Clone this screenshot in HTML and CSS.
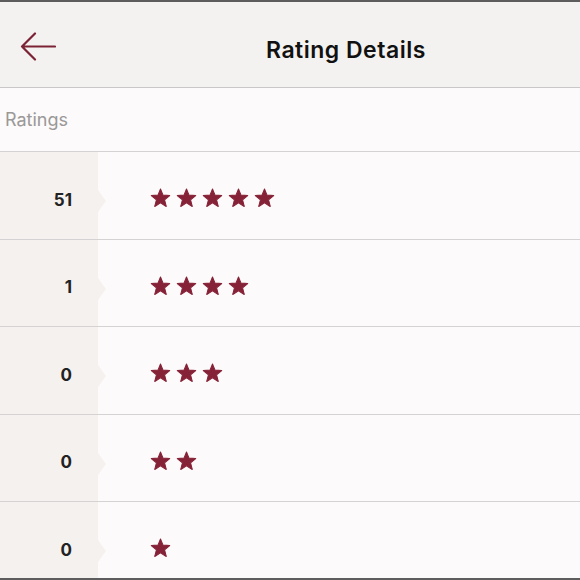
FILE: index.html
```html
<!DOCTYPE html>
<html>
<head>
<meta charset="utf-8">
<link rel="stylesheet" href="styles.css">
</head>
<body>
<div class="screen">
  <div class="topline"></div>
  <header class="header">
    <button class="back" aria-label="Back">
      <svg width="36" height="30" viewBox="0 0 36 30"><path d="M35 14.5 H2 M15 1.5 L2 14.5 L15 27.5" fill="none" stroke="#7c2235" stroke-width="2.2" stroke-linecap="round" stroke-linejoin="round"/></svg>
    </button>
    <h1 class="title">Rating Details</h1>
  </header>
  <div class="label">Ratings</div>
  <div class="list">
    <div class="row"><div class="count">51</div><div class="stars" data-n="5"></div></div>
    <div class="row"><div class="count">1</div><div class="stars" data-n="4"></div></div>
    <div class="row"><div class="count">0</div><div class="stars" data-n="3"></div></div>
    <div class="row"><div class="count">0</div><div class="stars" data-n="2"></div></div>
    <div class="row"><div class="count">0</div><div class="stars" data-n="1"></div></div>
  </div>
  <div class="bottomline"></div>
</div>
<script>
document.querySelectorAll('.stars').forEach(function(el){
  var n = +el.getAttribute('data-n');
  var s = '';
  for (var i = 0; i < n; i++) {
    s += '<svg class="star" width="21" height="20" viewBox="0 0 24 23"><path d="M12 1.2 L14.9 8.2 L22.6 8.7 L16.7 13.6 L18.6 21.2 L12 17.1 L5.4 21.2 L7.3 13.6 L1.4 8.7 L9.1 8.2 Z" fill="#862237" stroke="#862237" stroke-width="1.2" stroke-linejoin="round"/></svg>';
  }
  el.innerHTML = s;
});
</script>
</body>
</html>
```
FILE: styles.css
```css
html, body {
  margin: 0;
  padding: 0;
}
body {
  width: 580px;
  height: 580px;
  overflow: hidden;
  font-family: "Inter", "Open Sans", sans-serif;
  background: #fcfafa;
}
.screen {
  height: 580px;
  display: flex;
  flex-direction: column;
}
.topline {
  height: 2px;
  background: #5e5d5d;
  flex: none;
}
.header {
  flex: none;
  box-sizing: border-box;
  height: 86px;
  padding-top: 4px;
  background: #f4f2f0;
  border-bottom: 1px solid #c9c7c7;
  display: flex;
  align-items: center;
}
.back {
  border: 0;
  background: none;
  padding: 0;
  margin-left: 20px;
  width: 36px;
  height: 30px;
  display: flex;
}
.title {
  margin: 0 0 0 210px;
  padding-top: 6px;
  font-size: 23px;
  font-weight: 600;
  color: #111;
  letter-spacing: 0.5px;
}
.label {
  flex: none;
  height: 63px;
  display: flex;
  align-items: center;
  padding-left: 5px;
  font-size: 18px;
  color: #9a9898;
  border-bottom: 1px solid #d4d2d2;
  background: #fcfafa;
}
.list {
  flex: 1;
  overflow: hidden;
}
.row {
  height: 86.5px;
  border-bottom: 1px solid #d4d2d2;
  display: grid;
  grid-template-columns: 98px 1fr;
}
.count {
  position: relative;
  background: #f5f1ee;
  display: flex;
  align-items: center;
  justify-content: flex-end;
  padding-right: 26px;
  padding-top: 9px;
  font-size: 17px;
  font-weight: 700;
  color: #222;
}
.count::after {
  content: "";
  position: absolute;
  right: -8px;
  top: 50%;
  margin-top: -5px;
  border-top: 11px solid transparent;
  border-bottom: 11px solid transparent;
  border-left: 8px solid #f5f1ee;
}
.stars {
  display: flex;
  align-items: center;
  gap: 5px;
  padding-left: 52px;
  padding-top: 6px;
}
.star {
  display: block;
}
.bottomline {
  flex: none;
  height: 2px;
  background: #5e5d5d;
}
```
